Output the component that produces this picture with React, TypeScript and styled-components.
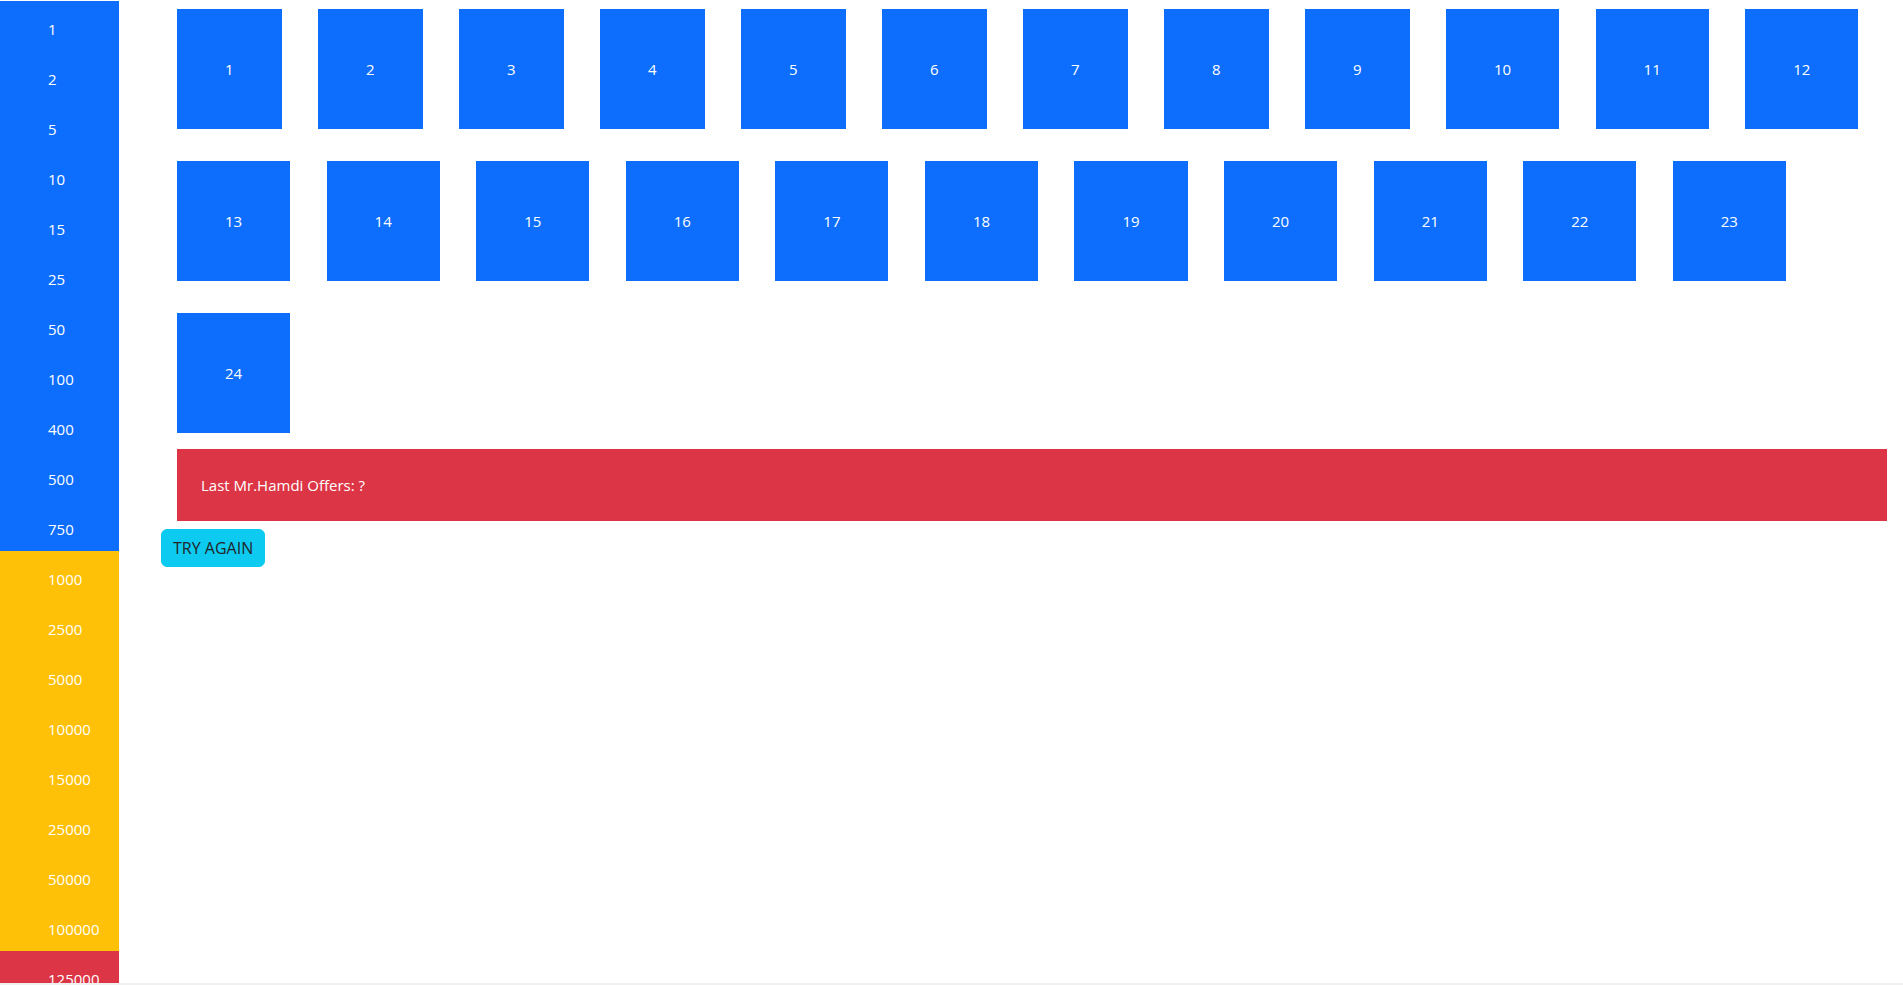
import React, { Fragment } from 'react';
import styled, { createGlobalStyle } from 'styled-components';

const GlobalStyle = createGlobalStyle`
  * { box-sizing: border-box; }
  body {
    margin: 0;
    background: #fff;
    color: #212529;
    font-family: "Segoe UI", "Open Sans", "Noto Sans", sans-serif;
    font-size: 15px;
    line-height: 24px;
  }
`;

const tones = { blue: '#0d6efd', yellow: '#ffc107', red: '#dc3545' };
type Tone = keyof typeof tones;

const Page = styled.div`
  display: flex;
  height: 100vh;
  overflow: hidden;
  border-bottom: 2px solid #f0f0f0;
`;

const Amounts = styled.ul`
  flex: none;
  width: 119px;
  margin: 1px 0 0;
  padding: 0;
  list-style: none;
`;

const Amount = styled.li<{ $tone: Tone }>`
  height: 50px;
  padding: 16px 0 10px 48px;
  background: ${({ $tone }) => tones[$tone]};
  color: #fff;
`;

const Board = styled.main`
  flex: 1;
  min-width: 0;
  padding: 9px 16px 0 42px;
`;

const Boxes = styled.div`
  margin-top: -16px;
  font-size: 17px;
`;

const Box = styled.button`
  height: 120px;
  margin: 16px;
  padding: 0 48px;
  border: 0;
  background: ${tones.blue};
  color: #fff;
  font-family: inherit;
  font-size: 15px;
  line-height: 24px;
`;

const Offers = styled.p`
  margin: 0 0 8px 16px;
  padding: 24px;
  background: ${tones.red};
  color: #fff;
`;

const Retry = styled.button`
  padding: 6px 11px;
  border: 1px solid #0dcaf0;
  border-radius: 6px;
  background: #0dcaf0;
  color: #212529;
  font-family: inherit;
  font-size: 16px;
  line-height: 24px;
`;

const blue = [1, 2, 5, 10, 15, 25, 50, 100, 400, 500, 750];
const yellow = [1000, 2500, 5000, 10000, 15000, 25000, 50000, 100000];
const red = [125000];
const amounts: { value: number; tone: Tone }[] = [
  ...blue.map((value) => ({ value, tone: 'blue' as Tone })),
  ...yellow.map((value) => ({ value, tone: 'yellow' as Tone })),
  ...red.map((value) => ({ value, tone: 'red' as Tone })),
];
const boxes = Array.from({ length: 24 }, (_, i) => i + 1);

export default function App() {
  return (
    <Page>
      <GlobalStyle />
      <Amounts>
        {amounts.map(({ value, tone }) => (
          <Amount key={value} $tone={tone}>{value}</Amount>
        ))}
      </Amounts>
      <Board>
        <Boxes>
          {boxes.map((n) => (
            <Fragment key={n}>
              <Box type="button">{n}</Box>{' '}
            </Fragment>
          ))}
        </Boxes>
        <Offers>Last Mr.Hamdi Offers: ?</Offers>
        <Retry type="button">TRY AGAIN</Retry>
      </Board>
    </Page>
  );
}
